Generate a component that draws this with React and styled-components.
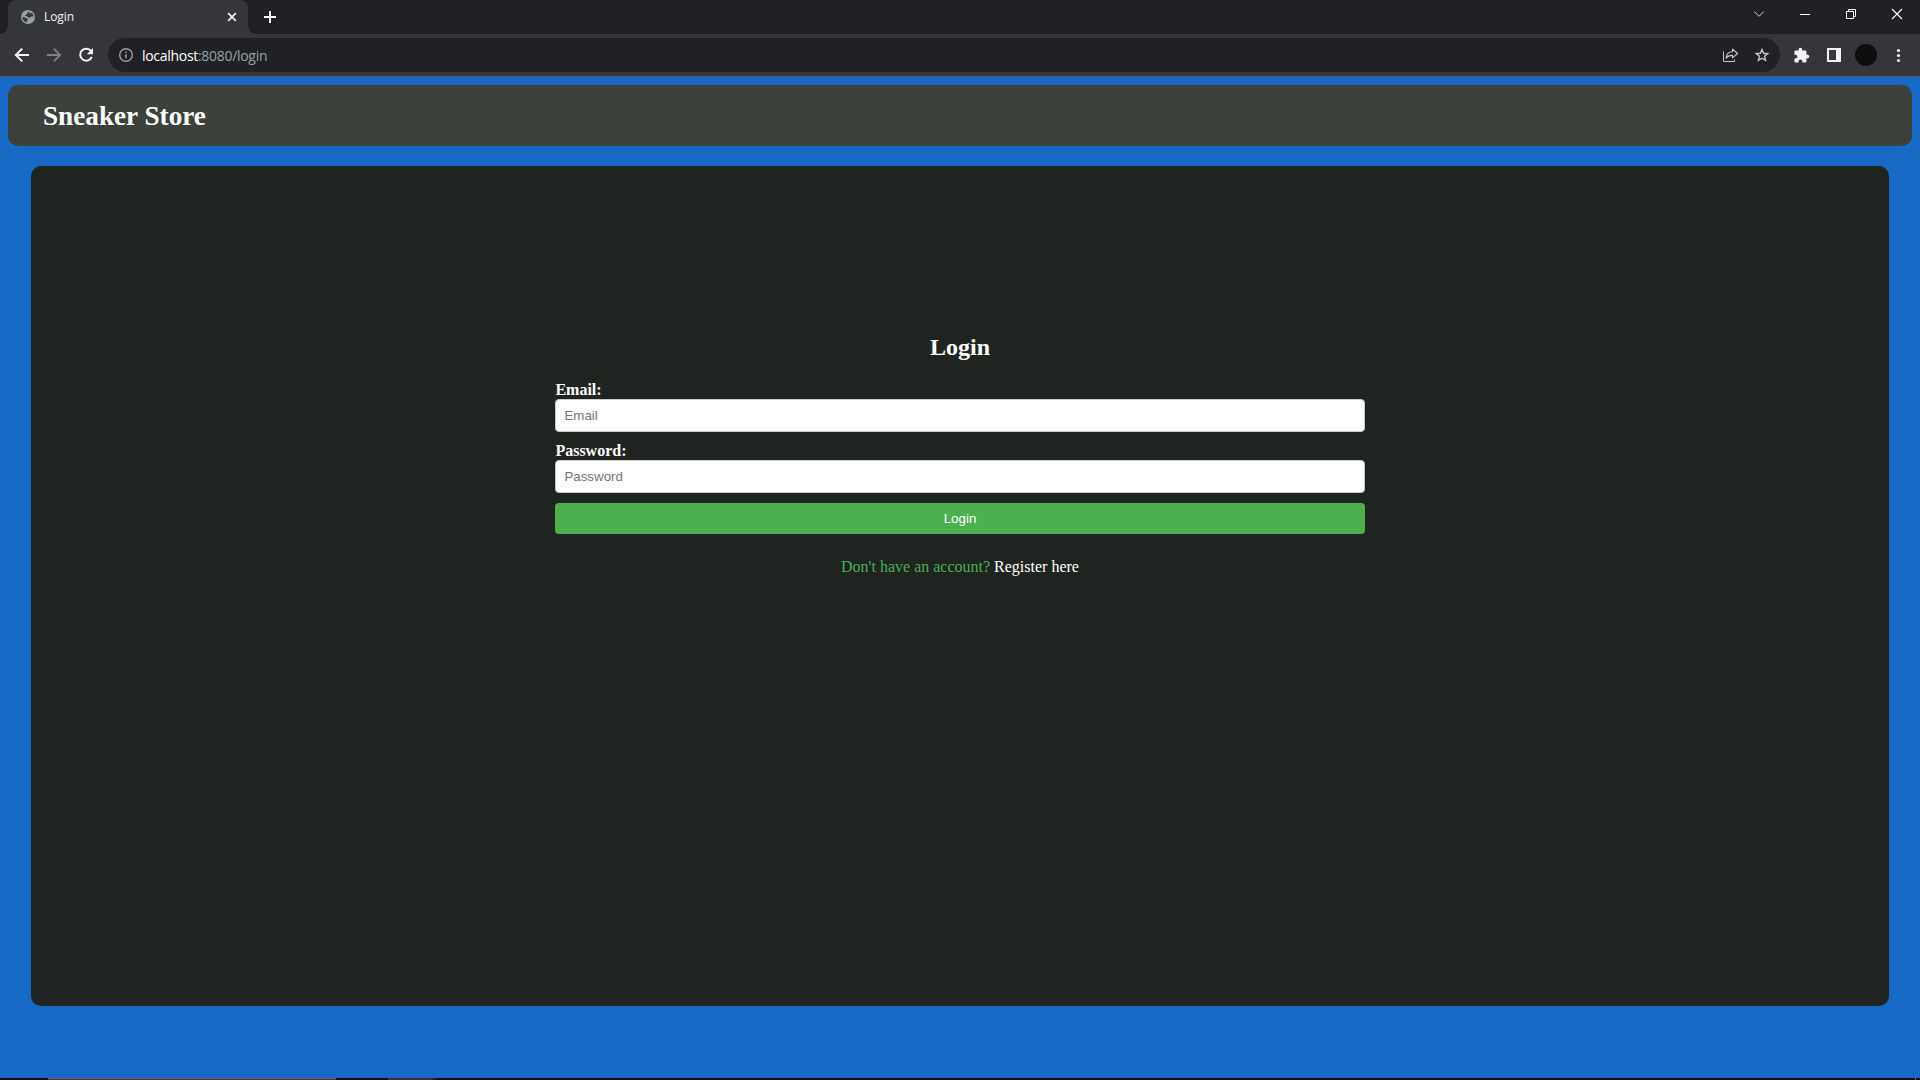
import React from "react";
import styled, { createGlobalStyle } from "styled-components";

const GlobalStyle = createGlobalStyle`
  * { box-sizing: border-box; }
  html, body { margin: 0; padding: 0; }
  body { overflow: hidden; background: #1669c4; }
`;

const Screen = styled.div`
  display: flex;
  flex-direction: column;
  width: 1920px;
  height: 1080px;
  background: #1669c4;
  font-family: "Liberation Serif", "Times New Roman", serif;
`;

const TabStrip = styled.div`
  display: flex;
  height: 34px;
  background: #202124;
  padding-left: 8px;
  font-family: "Open Sans", "Noto Sans", sans-serif;
`;

const Tab = styled.div`
  position: relative;
  display: flex;
  align-items: center;
  width: 240px;
  height: 34px;
  padding: 0 9px 0 13px;
  background: #35363a;
  border-radius: 8px 8px 0 0;

  &::before, &::after {
    content: "";
    position: absolute;
    bottom: 0;
    width: 8px;
    height: 8px;
  }
  &::before {
    left: -8px;
    background: radial-gradient(circle at 0 0, transparent 7.5px, #35363a 8.2px);
  }
  &::after {
    right: -8px;
    background: radial-gradient(circle at 100% 0, transparent 7.5px, #35363a 8.2px);
  }
`;

const TabTitle = styled.span`
  flex: 1;
  margin-left: 9px;
  color: #f1f3f4;
  font-size: 12px;
  letter-spacing: -0.1px;
  line-height: 34px;
`;

const Icon = styled.svg`
  display: block;
  flex: none;
  width: ${(p) => p.$w}px;
  height: ${(p) => p.$h || p.$w}px;
  overflow: visible;
`;

const NewTab = styled.div`
  display: flex;
  align-items: center;
  justify-content: center;
  width: 44px;
  height: 34px;
`;

const WindowControls = styled.div`
  display: flex;
  margin-left: auto;
`;

const WindowButton = styled.div`
  display: flex;
  align-items: center;
  justify-content: center;
  width: 46px;
  height: 28px;
`;

const Toolbar = styled.div`
  display: flex;
  align-items: center;
  height: 43px;
  padding: 0 14px;
  background: #35363a;
  border-bottom: 1px solid #5b5c5f;
`;

const NavGroup = styled.div`
  display: flex;
  gap: 16px;
  margin-right: 14px;
`;

const AddressBar = styled.div`
  display: flex;
  align-items: center;
  flex: 1;
  height: 34px;
  padding: 0 10px 0 10px;
  background: #202124;
  border-radius: 17px;
`;

const Url = styled.span`
  flex: 1;
  margin-left: 8px;
  padding-top: 1px;
  color: #ffffff;
  font: 14px/33px "Open Sans", "Noto Sans", sans-serif;
  letter-spacing: -0.3px;
`;

const UrlRest = styled.span`
  color: #9aa0a6;
`;

const AddressActions = styled.div`
  display: flex;
  gap: 16px;
`;

const ToolbarActions = styled.div`
  display: flex;
  align-items: center;
  margin-left: 13px;
`;

const PanelButton = styled.div`
  margin: 0 14px 0 17px;
`;

const Avatar = styled.div`
  width: 22px;
  height: 22px;
  margin-right: 13px;
  border-radius: 50%;
  background: #0e0e0e;
`;

const Page = styled.main`
  display: flex;
  flex-direction: column;
  flex: 1;
  padding: 8px;
`;

const Header = styled.header`
  display: flex;
  align-items: center;
  height: 61px;
  padding: 1px 35px 0;
  background: #3c413c;
  border-radius: 10px;
`;

const Brand = styled.h1`
  margin: 0;
  color: #fff;
  font-size: 27.2px;
  line-height: 30px;
`;

const Card = styled.section`
  display: flex;
  justify-content: center;
  height: 840px;
  margin: 20px 23px 0;
  padding-top: 167px;
  background: #1f2420;
  border-radius: 10px;
`;

const Form = styled.form`
  display: flex;
  flex-direction: column;
  width: 810px;
`;

const FormTitle = styled.h2`
  margin: 0 0 20px;
  color: #fff;
  font-size: 24px;
  line-height: 28px;
  text-align: center;
`;

const Label = styled.label`
  padding-left: 0.4px;
  color: #fff;
  font-size: 16px;
  font-weight: bold;
  line-height: 18px;
`;

const Input = styled.input`
  height: 33px;
  margin: 0 0 10px;
  padding: 8px 8px 8px 8.4px;
  border: 1px solid #ccc;
  border-radius: 4px;
  background: #fff;
  font: 13.333px "Liberation Sans", Arial, sans-serif;
  &::placeholder { color: #757575; }
`;

const Submit = styled.button`
  height: 31px;
  padding: 8px;
  border: 0;
  border-radius: 4px;
  background: #4caf50;
  color: #fff;
  font: 13.333px "Liberation Sans", Arial, sans-serif;
`;

const Prompt = styled.p`
  margin: 24px 0 0;
  color: #4caf50;
  font-size: 16px;
  line-height: 18px;
  text-align: center;
`;

const RegisterLink = styled.a`
  color: #fff;
  text-decoration: none;
`;

const Taskbar = styled.div`
  display: flex;
  height: 2px;
  padding-right: 4px;
  background: #140f10;
`;

const TaskSegment = styled.div`
  width: ${(p) => p.$w}px;
  margin-left: ${(p) => p.$gap || 0}px;
  background: ${(p) => p.$color};
  border-top: 1px solid ${(p) => p.$top || p.$color};
`;

const DesktopEdge = styled.div`
  width: 1px;
  margin-left: auto;
  background: #696565;
`;

export default function App() {
  return (
    <Screen>
      <GlobalStyle />
      <TabStrip>
        <Tab>
          <Icon $w={14} viewBox="0 0 14 14">
            <circle cx="7" cy="7" r="7" fill="#9aa0a6" />
            <path d="M8.2 1.4 C6.6 1.8 7 3 6.2 3.6 C5.4 4 5.7 4.9 4.8 5.1 L3.6 5.5 C4.2 6.2 6 5.8 6.4 6.8 C6.7 7.6 7.8 7.7 9 7.5 C9.9 7.3 9.7 6.4 10.6 6.4 L12.5 6.6 C12.4 4.4 11.6 3.2 10.4 2.4 C10.2 3.4 9.2 3.2 8.6 3.6 C8 3.2 8.8 2.2 8.2 1.4 Z M1.4 7 C2.6 7 4.2 7 5 8 C5.6 8.8 7 8.6 7.2 9.6 C6.8 10.4 5.8 10.2 5.7 11.2 L5.6 12.4 C3 11.9 1.4 9.8 1.4 7 Z" fill="#35363a" />
          </Icon>
          <TabTitle>Login</TabTitle>
          <Icon $w={14} viewBox="0 0 14 14">
            <path d="M3.2 3.2 L10.8 10.8 M10.8 3.2 L3.2 10.8" stroke="#f1f3f4" strokeWidth="1.7" />
          </Icon>
        </Tab>
        <NewTab>
          <Icon $w={12} viewBox="0 0 12 12">
            <path d="M6 0 V12 M0 6 H12" stroke="#fff" strokeWidth="2" />
          </Icon>
        </NewTab>
        <WindowControls>
          <WindowButton>
            <Icon $w={10} $h={6} viewBox="0 0 10 6">
              <path d="M0.2 0.5 L5 5.3 L9.8 0.5" fill="none" stroke="#d5d6d7" />
            </Icon>
          </WindowButton>
          <WindowButton>
            <Icon $w={10} $h={2} viewBox="0 0 10 2"><path d="M0 1.5H10" stroke="#fff" /></Icon>
          </WindowButton>
          <WindowButton>
            <Icon $w={10} viewBox="0 0 10 10">
              <path d="M.5 2.5H7.5V9.5H.5Z M2.5 2.5V.5H9.5V7.5H7.5" fill="none" stroke="#fff" />
            </Icon>
          </WindowButton>
          <WindowButton>
            <Icon $w={10} viewBox="0 0 10 10"><path d="M0 0 L10 10 M10 0 L0 10" stroke="#fff" strokeWidth="1.1" /></Icon>
          </WindowButton>
        </WindowControls>
      </TabStrip>
      <Toolbar>
        <NavGroup>
          <Icon $w={16} viewBox="0 0 16 16">
            <path d="M15 8 H2.5 M8.2 1.6 L1.8 8 L8.2 14.4" fill="none" stroke="#f1f3f4" strokeWidth="2" />
          </Icon>
          <Icon $w={16} viewBox="0 0 16 16">
            <path d="M1 8 H13.5 M7.8 1.6 L14.2 8 L7.8 14.4" fill="none" stroke="#808184" strokeWidth="1.8" />
          </Icon>
          <Icon $w={16} viewBox="0 0 16 16">
            <path d="M13.1 4.2 A6 6 0 1 0 13.8 9.8" fill="none" stroke="#f1f3f4" strokeWidth="2" />
            <path d="M15 1 V7.2 H8.8 Z" fill="#f1f3f4" />
          </Icon>
        </NavGroup>
        <AddressBar>
          <Icon $w={16} viewBox="0 0 16 16">
            <circle cx="8" cy="8" r="6.3" fill="none" stroke="#9aa0a6" strokeWidth="1.4" />
            <path d="M8 7.2 V11.3 M8 4.4 V6" stroke="#9aa0a6" strokeWidth="1.5" />
          </Icon>
          <Url>localhost<UrlRest>:8080/login</UrlRest></Url>
          <AddressActions>
            <Icon $w={16} viewBox="0 0 16 16">
              <path d="M1.5 4.5 V14.5 H12.5 V12.5" fill="none" stroke="#c4c7c9" strokeWidth="1" />
              <path d="M10.5 2 L15.6 6.500 L10.500 10.800 V8.400 C7.600 8.300 5.600 9 4 11.200 C4.400 7.500 6.400 4.900 10.500 4.500 Z" fill="none" stroke="#c4c7c9" strokeWidth="1.1" strokeLinejoin="round" />
            </Icon>
            <Icon $w={16} viewBox="0 0 16 16">
              <path d="M8 2.500 L9.600 6.300 L13.700 6.600 L10.600 9.300 L11.600 13.300 L8 11.200 L4.400 13.300 L5.400 9.300 L2.300 6.600 L6.400 6.300 Z" fill="none" stroke="#c4c7c9" strokeWidth="1.400" />
            </Icon>
          </AddressActions>
        </AddressBar>
        <ToolbarActions>
          <Icon $w={17} viewBox="0 0 24 24">
            <path fill="#f1f3f4" d="M20.5 11H19V7c0-1.1-.9-2-2-2h-4V3.500C13 2.120 11.880 1 10.500 1S8 2.120 8 3.500V5H4c-1.100 0-1.990.900-1.990 2v3.800H3.500c1.490 0 2.700 1.210 2.700 2.700s-1.210 2.700-2.700 2.700H2V20c0 1.100.900 2 2 2h3.800v-1.500c0-1.490 1.210-2.700 2.700-2.700 1.490 0 2.700 1.210 2.700 2.700V22H17c1.100 0 2-.900 2-2v-4h1.500c1.380 0 2.500-1.120 2.500-2.500S21.880 11 20.500 11z" />
          </Icon>
          <PanelButton>
            <Icon $w={14} viewBox="0 0 14 14">
              <path d="M0 0H14V14H0Z M2 2V12H9V2Z" fill="#f1f3f4" fillRule="evenodd" />
            </Icon>
          </PanelButton>
          <Avatar />
          <Icon $w={16} viewBox="0 0 16 16">
            <g fill="#f1f3f4"><circle cx="8.5" cy="3.500" r="1.600" /><circle cx="8.500" cy="8.500" r="1.600" /><circle cx="8.500" cy="13.500" r="1.600" /></g>
          </Icon>
        </ToolbarActions>
      </Toolbar>
      <Page>
        <Header><Brand>Sneaker Store</Brand></Header>
        <Card>
          <Form onSubmit={(e) => e.preventDefault()}>
            <FormTitle>Login</FormTitle>
            <Label htmlFor="email">Email:</Label>
            <Input id="email" type="email" placeholder="Email" />
            <Label htmlFor="password">Password:</Label>
            <Input id="password" type="password" placeholder="Password" />
            <Submit type="submit">Login</Submit>
            <Prompt>Don't have an account? <RegisterLink>Register here</RegisterLink></Prompt>
          </Form>
        </Card>
      </Page>
      <Taskbar>
        <TaskSegment $w={288} $gap={48} $color="#3f3b3b" $top="#696565" />
        <TaskSegment $w={44} $gap={52} $color="#353031" />
        <TaskSegment $w={4} $color="#252122" />
        <DesktopEdge />
      </Taskbar>
    </Screen>
  );
}
